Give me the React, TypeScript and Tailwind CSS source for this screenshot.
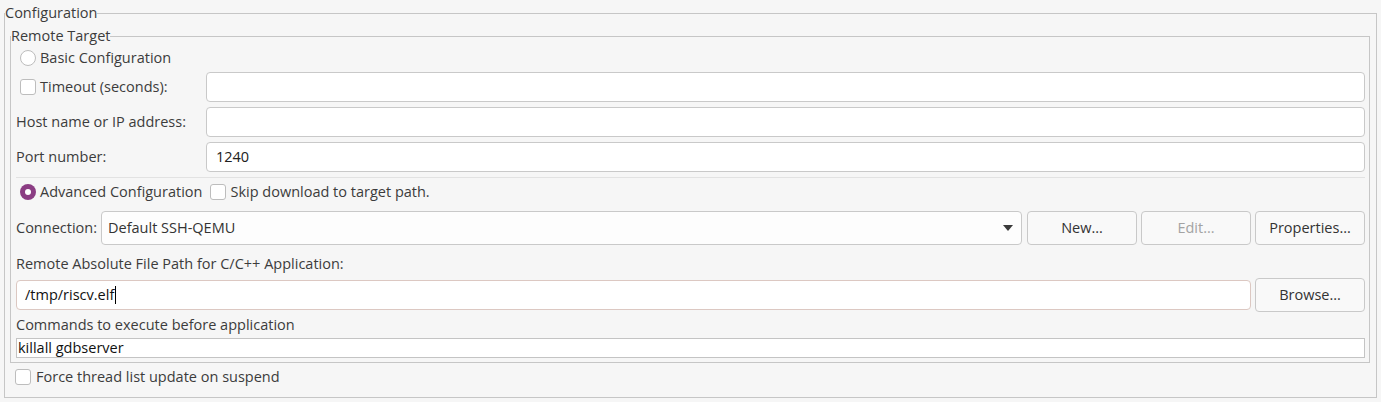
import React from "react";

function Radio({ checked }: { checked?: boolean }) {
  if (checked) {
    return (
      <span className="flex h-[16px] w-[16px] shrink-0 items-center justify-center rounded-full bg-[#8b3d83]">
        <span className="h-[6px] w-[6px] rounded-full bg-white" />
      </span>
    );
  }
  return <span className="block h-[16px] w-[16px] shrink-0 rounded-full border border-[#bdbdbd] bg-white" />;
}

function Check() {
  return <span className="block h-[16px] w-[16px] shrink-0 rounded-[3px] border border-[#bdbdbd] bg-white" />;
}

function Field({ value }: { value?: string }) {
  return (
    <div className="flex h-[30px] flex-1 items-center rounded-[4px] border border-[#c9c9c9] bg-white pl-[9px] text-[#202020]">
      {value}
    </div>
  );
}

function Button({ label, disabled }: { label: string; disabled?: boolean }) {
  return (
    <div
      className={
        "flex h-[34px] w-[110px] items-center justify-center rounded-[4px] border border-[#c9c9c9] bg-[#f9f9f9] " +
        (disabled ? "text-[#a3a3a3]" : "text-[#333333]")
      }
    >
      {label}
    </div>
  );
}

export default function App() {
  return (
    <div className="h-[402px] w-[1381px] bg-[#f6f6f6] pl-[4px] pt-[5px] font-['Open_Sans',sans-serif] text-[14.5px] text-[#3c3c3c]">
      <fieldset className="h-[393px] w-[1373px] border border-[#c6c6c6] px-[5px] pt-[7px]">
        <legend className="-ml-[5px] p-0 leading-[16px]">Configuration</legend>

        {/* Remote Target group */}
        <fieldset className="mr-[1px] border border-[#c6c6c6] pb-[4px] pl-[5px] pr-[4px]">
          <legend className="-ml-[5px] p-0 leading-[16px]">Remote Target</legend>

          <div className="mt-[4px] flex h-[20px] items-center gap-[4px] pl-[4px]">
            <Radio />
            <span>Basic Configuration</span>
          </div>

          <div className="mt-[4px] flex h-[30px] items-center">
            <div className="flex w-[190px] items-center gap-[4px] pl-[4px]">
              <Check />
              <span>Timeout (seconds):</span>
            </div>
            <Field />
          </div>

          <div className="mt-[5px] flex h-[30px] items-center">
            <div className="w-[190px]">Host name or IP address:</div>
            <Field />
          </div>

          <div className="mt-[5px] flex h-[30px] items-center">
            <div className="w-[190px]">Port number:</div>
            <Field value="1240" />
          </div>

          <div className="mt-[5px] h-px bg-[#e2e2e2]" />

          <div className="mt-[4px] flex h-[20px] items-center gap-[4px] pl-[4px]">
            <Radio checked />
            <span>Advanced Configuration</span>
            <span className="ml-[4px]">
              <Check />
            </span>
            <span>Skip download to target path.</span>
          </div>

          <div className="mt-[9px] flex h-[34px] items-center">
            <div className="w-[85px]">Connection:</div>
            <div className="flex h-[34px] flex-1 items-center justify-between rounded-[4px] border border-[#c9c9c9] bg-[#fdfdfd] pl-[6px] pr-[8px] text-[#333333]">
              <span>Default SSH-QEMU</span>
              <svg width="10" height="6" viewBox="0 0 10 6">
                <path d="M0 0h10L5 6z" fill="#3a3a3a" />
              </svg>
            </div>
            <div className="ml-[5px] flex gap-[4px]">
              <Button label="New..." />
              <Button label="Edit..." disabled />
              <Button label="Properties..." />
            </div>
          </div>

          <div className="mt-[9px] flex h-[20px] items-center">Remote Absolute File Path for C/C++ Application:</div>

          <div className="mt-[4px] flex h-[34px] items-center gap-[4px]">
            <div className="flex h-[30px] flex-1 items-center rounded-[4px] border border-[#dcc8c2] bg-white pl-[8px] text-[#111111]">
              /tmp/riscv.elf
              <span className="ml-px h-[18px] w-px bg-black" />
            </div>
            <Button label="Browse..." />
          </div>

          <div className="mt-[3px] flex h-[20px] items-center">Commands to execute before application</div>

          <div className="mt-[3px] flex h-[20px] items-center border border-[#c4c4c4] bg-white pl-px leading-[18px] text-[#111111]">
            killall gdbserver
          </div>
        </fieldset>

        <div className="mt-[4px] flex h-[20px] items-center gap-[5px] pl-[5px]">
          <Check />
          <span>Force thread list update on suspend</span>
        </div>
      </fieldset>
    </div>
  );
}
